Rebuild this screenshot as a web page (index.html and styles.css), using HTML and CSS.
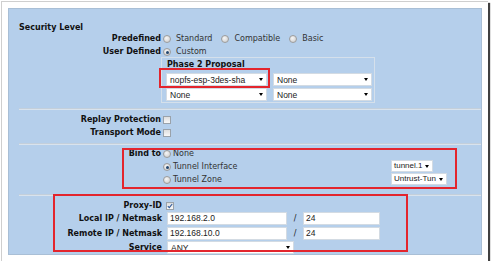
FILE: index.html
```html
<!DOCTYPE html>
<html lang="en">
<head>
    <meta charset="UTF-8">
    <meta name="viewport" content="width=device-width, initial-scale=1.0">
    <title>Security Level</title>
    <link rel="stylesheet" href="styles.css">
</head>
<body>

    <div class="frame">
        <div class="panel">
            <div class="title">Security Level</div>

            <div class="row first">
                <div class="label">Predefined</div>
                <span class="option"><span class="radio"></span>Standard</span>
                <span class="option"><span class="radio"></span>Compatible</span>
                <span class="option"><span class="radio"></span>Basic</span>
            </div>
            <div class="row">
                <div class="label">User Defined</div>
                <span class="option"><span class="radio checked"></span>Custom</span>
            </div>

            <div class="proposal">
                <div class="proposal-title">Phase 2 Proposal</div>
                <div class="proposal-row">
                    <div class="select s-left">nopfs-esp-3des-sha<span class="arrow"></span></div>
                    <div class="select s-right">None<span class="arrow"></span></div>
                </div>
                <div class="proposal-row">
                    <div class="select s-left">None<span class="arrow"></span></div>
                    <div class="select s-right">None<span class="arrow"></span></div>
                </div>
            </div>

            <div class="divider"></div>

            <div class="row after-divider">
                <div class="label">Replay Protection</div>
                <span class="checkbox"></span>
            </div>
            <div class="row">
                <div class="label">Transport Mode</div>
                <span class="checkbox"></span>
            </div>

            <div class="divider"></div>

            <div class="bind">
                <div class="label">Bind to</div>
                <div class="bind-options">
                    <div class="bind-option"><span class="radio"></span>None</div>
                    <div class="bind-option"><span class="radio checked"></span>Tunnel Interface</div>
                    <div class="bind-option"><span class="radio"></span>Tunnel Zone</div>
                </div>
                <div class="bind-selects">
                    <div class="select s-tunnel">tunnel.1<span class="arrow"></span></div>
                    <div class="select s-zone">Untrust-Tun<span class="arrow"></span></div>
                </div>
            </div>

            <div class="divider divider-bottom"></div>

            <div class="proxy">
                <div class="proxy-row proxy-first">
                    <div class="label">Proxy-ID</div>
                    <span class="checkbox checked">
                        <svg width="6" height="6" viewBox="0 0 6 6"><path d="M0.8 3.2 L2.3 4.7 L5.2 1" fill="none" stroke="#2f5a9c" stroke-width="1.1"/></svg>
                    </span>
                </div>
                <div class="proxy-row">
                    <div class="label">Local IP / Netmask</div>
                    <div class="field f-ip">192.168.2.0</div>
                    <span class="slash">/</span>
                    <div class="field f-mask">24</div>
                </div>
                <div class="proxy-row remote">
                    <div class="label">Remote IP / Netmask</div>
                    <div class="field f-ip">192.168.10.0</div>
                    <span class="slash">/</span>
                    <div class="field f-mask">24</div>
                </div>
                <div class="proxy-row">
                    <div class="label">Service</div>
                    <div class="select s-service">ANY<span class="arrow"></span></div>
                </div>
            </div>

            <!-- red highlight marks drawn over the form -->
            <div class="mark mark-proposal"></div>
            <div class="mark mark-bind"></div>
            <div class="mark mark-proxy"></div>
        </div>
    </div>

</body>
</html>
```

FILE: styles.css
```css
body {
    margin: 0;
    padding: 0;
    background-color: #fff;
    font-family: "DejaVu Sans", Verdana, sans-serif;
    font-size: 8px;
    color: #333;
}
.frame {
    box-sizing: border-box;
    width: 487px;
    height: 260px;
    margin: 1px 0 0 1px;
    padding: 6px;
    background-color: #fff;
    border-left: 1px solid #cfcfcf;
    border-top: 1px solid #cfcfcf;
    box-shadow: 2px 2px 1px rgba(0, 0, 0, 0.75);
}
.panel {
    position: relative;
    box-sizing: border-box;
    width: 474px;
    height: 247px;
    padding: 14px 0 0 10px;
    background-color: #b5cfeb;
    border: 1px solid #a9bfd6;
}
.title {
    font-weight: bold;
    color: #111;
    line-height: 10px;
}
.label {
    flex-shrink: 0;
    width: 142px;
    margin-right: 2px;
    text-align: right;
    font-weight: bold;
    color: #111;
}
.row {
    display: flex;
    align-items: center;
    height: 10px;
    line-height: 10px;
    margin-top: 3px;
}
.row.first {
    margin-top: 1px;
}
.row.after-divider {
    margin-top: 5px;
}
.option {
    display: inline-flex;
    align-items: center;
    margin-right: 9px;
}
.option .radio {
    margin-right: 5px;
}
.radio {
    position: relative;
    box-sizing: border-box;
    display: inline-block;
    width: 8px;
    height: 8px;
    border-radius: 50%;
    border: 1px solid #9c9c9c;
    background: radial-gradient(circle at 40% 35%, #f6f6f6, #c9c9c9);
}
.radio.checked::after {
    content: "";
    position: absolute;
    left: 1.5px;
    top: 1.5px;
    width: 3px;
    height: 3px;
    border-radius: 50%;
    background-color: #23466f;
}
.checkbox {
    box-sizing: border-box;
    display: inline-flex;
    align-items: center;
    justify-content: center;
    width: 8px;
    height: 8px;
    border: 1px solid #9aa2aa;
    background: linear-gradient(#dedede, #f8f8f8);
}
.proposal {
    box-sizing: border-box;
    width: 214px;
    margin-left: 142px;
    padding: 2px 2px 1px 4px;
    border: 1px solid #d5e0eb;
}
.proposal-title {
    margin-left: 1px;
    font-weight: bold;
    color: #111;
    line-height: 10px;
}
.proposal-row {
    display: flex;
    gap: 6px;
    margin-top: 2px;
}
.proposal-title + .proposal-row {
    margin-top: 3px;
}
.select {
    box-sizing: border-box;
    display: flex;
    align-items: center;
    justify-content: space-between;
    height: 13px;
    padding: 0 3px 0 3px;
    background-color: #fff;
    border: 1px solid #d3dbe3;
    font-family: "Liberation Sans", Arial, sans-serif;
    font-size: 8.5px;
    color: #222;
    white-space: nowrap;
}
.arrow {
    flex-shrink: 0;
    width: 0;
    height: 0;
    border-left: 2px solid transparent;
    border-right: 2px solid transparent;
    border-top: 3px solid #000;
}
.s-left {
    width: 101px;
}
.s-right {
    width: 99px;
}
.divider {
    height: 0;
    margin-top: 5px;
    border-top: 1px solid #c3cfdb;
    border-bottom: 1px solid #d9e3ed;
}
.divider-bottom {
    margin-top: 6px;
}
.bind {
    display: flex;
    margin-top: 4px;
    line-height: 10px;
}
.bind-options {
    width: 228px;
}
.bind-option {
    display: flex;
    align-items: center;
    height: 10px;
    margin-bottom: 3px;
}
.bind-option .radio {
    margin-right: 2px;
}
.bind-selects {
    display: flex;
    flex-direction: column;
    gap: 1px;
    margin-top: 11px;
}
.bind-selects .select {
    height: 12px;
    padding: 0 3px 0 2px;
    font-size: 8px;
}
.s-tunnel {
    width: 42px;
}
.s-zone {
    width: 56px;
}
.proxy {
    margin-top: 5px;
}
.proxy .label {
    width: 143px;
    margin-right: 5px;
}
.proxy-row {
    display: flex;
    align-items: center;
    height: 13px;
    line-height: 10px;
    margin-top: 1px;
}
.proxy-row.proxy-first {
    height: 10px;
    margin-top: 0;
}
.proxy-row.remote {
    margin-top: 2px;
}
.proxy-first .checkbox {
    margin-left: -1px;
}
.field {
    box-sizing: border-box;
    height: 13px;
    padding: 0 2px;
    line-height: 11px;
    background-color: #fff;
    border: 1px solid #d3dbe3;
    font-family: "Liberation Sans", Arial, sans-serif;
    font-size: 8.5px;
    color: #222;
}
.f-ip {
    width: 120px;
}
.f-mask {
    width: 77px;
}
.slash {
    width: 16px;
    text-align: center;
    color: #222;
}
.s-service {
    width: 127px;
}
.mark {
    position: absolute;
    box-sizing: border-box;
    border: 2px solid #e3252d;
}
.mark-proposal {
    left: 150px;
    top: 59px;
    width: 111px;
    height: 20px;
}
.mark-bind {
    left: 113px;
    top: 139px;
    width: 335px;
    height: 41px;
}
.mark-proxy {
    left: 44px;
    top: 185px;
    width: 355px;
    height: 58px;
}
```
